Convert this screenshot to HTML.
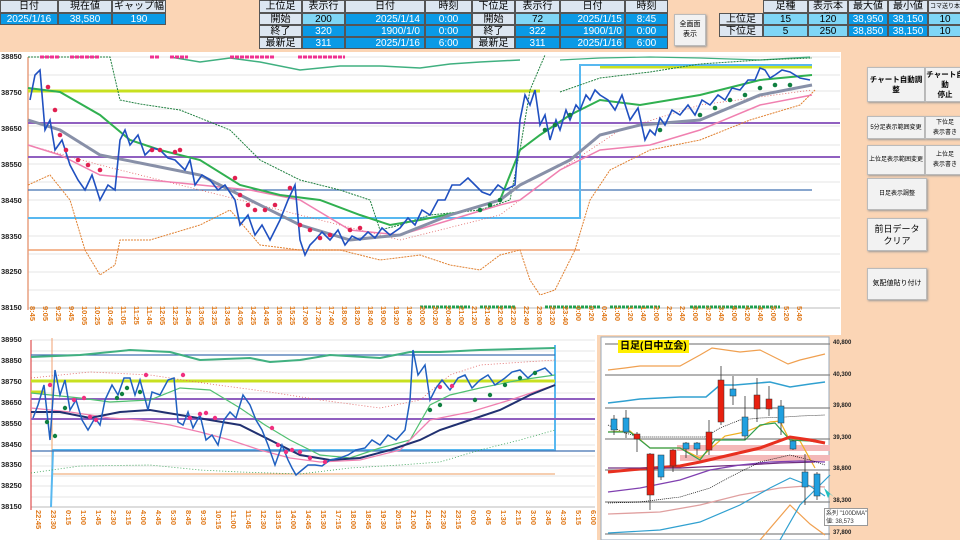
<!DOCTYPE html>
<html><head><meta charset="utf-8"><style>
*{margin:0;padding:0;box-sizing:border-box}
html,body{width:960px;height:540px;overflow:hidden}
body{background:#fbd5b5;font-family:"Liberation Sans","Noto Sans CJK JP",sans-serif;position:relative}
.c{position:absolute;font-size:10px;text-align:center;line-height:12px;border:1px solid #555;}
.h{background:#dce6f1;color:#000}
.b{background:#0a9ae6;color:#fff}
.lb{background:#7fd6f6;color:#000}
.btn{position:absolute;background:#f2f2f2;border:1px solid #bbb;box-shadow:1px 1px 2px #999;font-size:7px;display:flex;align-items:center;justify-content:center;text-align:center;line-height:10px}
.xl{position:absolute;display:flex;font-size:7.5px;color:#e07818;font-weight:bold}
.xl span{writing-mode:vertical-rl;display:block;height:26px}
.yl{position:absolute;font-size:7.5px;font-weight:bold;color:#222}
</style></head><body>
<div class="c h" style="left:0;top:0;width:58px;height:13px">日付</div>
<div class="c h" style="left:58px;top:0;width:54px;height:13px">現在値</div>
<div class="c h" style="left:112px;top:0;width:54px;height:13px">ギャップ幅</div>
<div class="c b" style="left:0;top:13px;width:58px;height:12px">2025/1/16</div>
<div class="c b" style="left:58px;top:13px;width:54px;height:12px">38,580</div>
<div class="c b" style="left:112px;top:13px;width:54px;height:12px">190</div>

<div class="c h" style="left:259px;top:0;width:43px;height:13px">上位足</div>
<div class="c h" style="left:302px;top:0;width:43px;height:13px">表示行</div>
<div class="c h" style="left:345px;top:0;width:80px;height:13px">日付</div>
<div class="c h" style="left:425px;top:0;width:47px;height:13px">時刻</div>
<div class="c h" style="left:259px;top:13px;width:43px;height:12px">開始</div>
<div class="c lb" style="left:302px;top:13px;width:43px;height:12px">200</div>
<div class="c b" style="left:345px;top:13px;width:80px;height:12px;text-align:right;padding-right:4px">2025/1/14</div>
<div class="c b" style="left:425px;top:13px;width:47px;height:12px">0:00</div>
<div class="c h" style="left:259px;top:25px;width:43px;height:12px">終了</div>
<div class="c b" style="left:302px;top:25px;width:43px;height:12px">320</div>
<div class="c b" style="left:345px;top:25px;width:80px;height:12px;text-align:right;padding-right:4px">1900/1/0</div>
<div class="c b" style="left:425px;top:25px;width:47px;height:12px">0:00</div>
<div class="c h" style="left:259px;top:37px;width:43px;height:12px">最新足</div>
<div class="c b" style="left:302px;top:37px;width:43px;height:12px">311</div>
<div class="c b" style="left:345px;top:37px;width:80px;height:12px;text-align:right;padding-right:4px">2025/1/16</div>
<div class="c b" style="left:425px;top:37px;width:47px;height:12px">6:00</div>

<div class="c h" style="left:472px;top:0;width:43px;height:13px">下位足</div>
<div class="c h" style="left:515px;top:0;width:45px;height:13px">表示行</div>
<div class="c h" style="left:560px;top:0;width:65px;height:13px">日付</div>
<div class="c h" style="left:625px;top:0;width:43px;height:13px">時刻</div>
<div class="c h" style="left:472px;top:13px;width:43px;height:12px">開始</div>
<div class="c lb" style="left:515px;top:13px;width:45px;height:12px">72</div>
<div class="c b" style="left:560px;top:13px;width:65px;height:12px;text-align:right;padding-right:2px">2025/1/15</div>
<div class="c b" style="left:625px;top:13px;width:43px;height:12px">8:45</div>
<div class="c h" style="left:472px;top:25px;width:43px;height:12px">終了</div>
<div class="c b" style="left:515px;top:25px;width:45px;height:12px">322</div>
<div class="c b" style="left:560px;top:25px;width:65px;height:12px;text-align:right;padding-right:2px">1900/1/0</div>
<div class="c b" style="left:625px;top:25px;width:43px;height:12px">0:00</div>
<div class="c h" style="left:472px;top:37px;width:43px;height:12px">最新足</div>
<div class="c b" style="left:515px;top:37px;width:45px;height:12px">311</div>
<div class="c b" style="left:560px;top:37px;width:65px;height:12px;text-align:right;padding-right:2px">2025/1/16</div>
<div class="c b" style="left:625px;top:37px;width:43px;height:12px">6:00</div>

<div class="btn" style="left:674px;top:14px;width:32px;height:32px;font-size:7px">全画面<br>表示</div>

<div class="c h" style="left:763px;top:0;width:45px;height:13px">足種</div>
<div class="c h" style="left:808px;top:0;width:40px;height:13px">表示本数</div>
<div class="c h" style="left:848px;top:0;width:40px;height:13px">最大値</div>
<div class="c h" style="left:888px;top:0;width:40px;height:13px">最小値</div>
<div class="c h" style="left:928px;top:0;width:34px;height:13px;font-size:6px">コマ送り本</div>
<div class="c h" style="left:719px;top:13px;width:44px;height:12px">上位足</div>
<div class="c lb" style="left:763px;top:13px;width:45px;height:12px">15</div>
<div class="c lb" style="left:808px;top:13px;width:40px;height:12px">120</div>
<div class="c b" style="left:848px;top:13px;width:40px;height:12px">38,950</div>
<div class="c b" style="left:888px;top:13px;width:40px;height:12px">38,150</div>
<div class="c lb" style="left:928px;top:13px;width:34px;height:12px">10</div>
<div class="c h" style="left:719px;top:25px;width:44px;height:12px">下位足</div>
<div class="c lb" style="left:763px;top:25px;width:45px;height:12px">5</div>
<div class="c lb" style="left:808px;top:25px;width:40px;height:12px">250</div>
<div class="c b" style="left:848px;top:25px;width:40px;height:12px">38,850</div>
<div class="c b" style="left:888px;top:25px;width:40px;height:12px">38,150</div>
<div class="c lb" style="left:928px;top:25px;width:34px;height:12px">10</div>

<div class="btn" style="left:867px;top:67px;width:58px;height:35px;font-size:7.5px;font-weight:bold">チャート自動調整</div>
<div class="btn" style="left:925px;top:67px;width:40px;height:35px;font-size:7.5px;font-weight:bold">チャート自動<br>停止</div>
<div class="btn" style="left:867px;top:116px;width:58px;height:23px;font-size:6px">5分足表示範囲変更</div>
<div class="btn" style="left:925px;top:116px;width:40px;height:23px;font-size:6px">下位足<br>表示書き</div>
<div class="btn" style="left:867px;top:145px;width:58px;height:30px;font-size:6px">上位足表示範囲変更</div>
<div class="btn" style="left:925px;top:145px;width:40px;height:30px;font-size:6px">上位足<br>表示書き</div>
<div class="btn" style="left:867px;top:178px;width:60px;height:32px;font-size:6px">日足表示調整</div>
<div class="btn" style="left:867px;top:218px;width:60px;height:33px;font-size:9px;line-height:12px">前日データ<br>クリア</div>
<div class="btn" style="left:867px;top:268px;width:60px;height:32px;font-size:7px">気配値貼り付け</div>

<div style="position:absolute;left:0;top:52px;width:841px;height:283px;background:#fff"></div>
<svg style="position:absolute;left:0;top:0" width="960" height="540">
<g stroke="#e4e4e4" stroke-width="1">
<line x1="28" y1="57" x2="840" y2="57"/><line x1="28" y1="75" x2="840" y2="75"/><line x1="28" y1="91" x2="840" y2="91"/><line x1="28" y1="109" x2="840" y2="109"/><line x1="28" y1="126" x2="840" y2="126"/><line x1="28" y1="145" x2="840" y2="145"/><line x1="28" y1="164" x2="840" y2="164"/><line x1="28" y1="182" x2="840" y2="182"/><line x1="28" y1="200" x2="840" y2="200"/><line x1="28" y1="218" x2="840" y2="218"/><line x1="28" y1="236" x2="840" y2="236"/><line x1="28" y1="254" x2="840" y2="254"/><line x1="28" y1="272" x2="840" y2="272"/><line x1="28" y1="290" x2="840" y2="290"/>
</g>
<line x1="28" y1="308" x2="840" y2="308" stroke="#bbb"/>
<line x1="28" y1="57" x2="28" y2="310" stroke="#e8a080" stroke-width="1.5"/>
<line x1="28" y1="91" x2="540" y2="91" stroke="#c8e020" stroke-width="3"/>
<line x1="600" y1="67" x2="812" y2="67" stroke="#c8e020" stroke-width="3"/>
<line x1="28" y1="123" x2="840" y2="123" stroke="#9060c0" stroke-width="2"/>
<line x1="28" y1="157" x2="840" y2="157" stroke="#9060c0" stroke-width="2"/>
<line x1="28" y1="190" x2="812" y2="190" stroke="#4070b0" stroke-width="1.2"/>
<polyline points="28,218 580,218 580,65 812,65" fill="none" stroke="#58b8f0" stroke-width="2"/>
<line x1="28" y1="250" x2="580" y2="250" stroke="#f0a070" stroke-width="1.5"/>
<polyline points="170,57 200,62 230,58 260,62 300,70 340,66 380,66 420,68 450,64 480,62 520,60" fill="none" stroke="#40b080" stroke-width="1.5"/>
<polyline points="560,60 600,58 650,57 700,58 760,60 810,57" fill="none" stroke="#40b080" stroke-width="1.2"/>
<polyline points="28,57 110,57 120,100 140,104 180,110 230,130 260,160 300,180 340,190 370,200 380,230 400,225 430,215 480,210 510,200 520,150 530,90 545,55" fill="none" stroke="#208040" stroke-width="1" stroke-dasharray="2,1"/>
<polyline points="560,92 600,78 650,72 700,64 760,60 812,58" fill="none" stroke="#208040" stroke-width="1" stroke-dasharray="2,1"/>
<polyline points="28,185 50,175 70,200 85,250 100,275 115,265 120,240 150,240 200,225 230,210 260,245 300,250 340,250 380,260 420,255 450,265 480,270 500,255 520,250 530,280 540,295 555,290 575,250 590,200 610,170 650,150 700,140 750,120 800,105 815,90" fill="none" stroke="#e08030" stroke-width="1" stroke-dasharray="2,1"/>
<polyline points="28,145 100,165 200,190 300,215 400,240 500,215 560,170 620,130 700,105 812,90" fill="none" stroke="#e06060" stroke-width="0.8" stroke-dasharray="1,2"/>
<polyline points="28,145 60,155 100,175 150,180 200,185 250,190 300,200 350,230 400,235 450,220 500,205 520,200 560,170 600,150 650,145 700,130 760,105 812,95" fill="none" stroke="#f080b0" stroke-width="1.5"/>
<polyline points="28,88 60,92 100,115 130,140 160,150 200,160 240,185 280,195 320,200 360,215 390,225 420,220 460,212 500,200 520,150 540,135 570,115 600,100 640,105 700,95 760,80 812,75" fill="none" stroke="#30b050" stroke-width="2"/>
<polyline points="28,120 60,130 100,155 150,165 200,175 250,200 300,225 350,240 400,235 450,215 500,200 520,185 540,175 570,160 600,135 640,125 700,120 760,95 812,85" fill="none" stroke="#8890a8" stroke-width="3"/>
<polyline points="30,100 35,75 40,70 45,130 50,120 55,150 62,140 70,165 78,180 85,190 92,175 100,200 108,185 115,190 120,140 125,130 130,145 138,135 145,155 152,148 160,150 168,158 175,160 185,170 190,160 195,185 202,175 210,180 218,190 225,185 235,200 240,225 248,215 255,235 262,225 270,240 280,220 288,200 295,185 300,240 305,255 310,245 315,240 322,232 330,240 338,230 345,245 352,236 360,240 368,232 375,238 382,228 390,235 400,228 408,218 415,225 422,210 430,215 438,200 445,200 452,185 460,185 468,178 475,185 482,192 490,195 498,185 505,190 515,185 520,120 525,95 530,105 535,90 540,125 545,115 550,140 556,120 560,130 566,110 570,120 576,105 580,110 586,95 590,100 595,90 600,95 608,100 615,110 622,95 630,120 638,108 645,140 650,130 655,135 660,118 665,125 672,110 680,115 688,105 695,115 702,100 710,105 718,95 725,100 732,88 740,90 748,80 755,80 760,68 765,70 770,78 775,75 782,70 790,72 800,78 810,80" fill="none" stroke="#2050c0" stroke-width="1.6"/>
<g fill="#e02050">
<circle cx="48" cy="87" r="2.3"/><circle cx="55" cy="110" r="2.3"/><circle cx="60" cy="135" r="2.3"/><circle cx="66" cy="150" r="2.3"/><circle cx="78" cy="160" r="2.3"/><circle cx="88" cy="165" r="2.3"/><circle cx="100" cy="170" r="2.3"/><circle cx="152" cy="150" r="2.3"/><circle cx="160" cy="150" r="2.3"/><circle cx="175" cy="152" r="2.3"/><circle cx="180" cy="150" r="2.3"/><circle cx="235" cy="178" r="2.3"/><circle cx="240" cy="195" r="2.3"/><circle cx="248" cy="205" r="2.3"/><circle cx="255" cy="210" r="2.3"/><circle cx="265" cy="210" r="2.3"/><circle cx="275" cy="205" r="2.3"/><circle cx="290" cy="188" r="2.3"/><circle cx="300" cy="225" r="2.3"/><circle cx="310" cy="230" r="2.3"/><circle cx="320" cy="238" r="2.3"/><circle cx="330" cy="235" r="2.3"/><circle cx="350" cy="230" r="2.3"/><circle cx="360" cy="228" r="2.3"/></g>
<g fill="#108040">
<circle cx="480" cy="210" r="2.3"/><circle cx="490" cy="205" r="2.3"/><circle cx="500" cy="200" r="2.3"/><circle cx="545" cy="130" r="2.3"/><circle cx="555" cy="125" r="2.3"/><circle cx="570" cy="115" r="2.3"/><circle cx="660" cy="130" r="2.3"/><circle cx="700" cy="115" r="2.3"/><circle cx="715" cy="108" r="2.3"/><circle cx="730" cy="100" r="2.3"/><circle cx="745" cy="95" r="2.3"/><circle cx="760" cy="88" r="2.3"/><circle cx="775" cy="85" r="2.3"/><circle cx="790" cy="85" r="2.3"/></g>
<g stroke="#f03090" stroke-width="3" stroke-dasharray="4,1">
<line x1="40" y1="57" x2="60" y2="57"/><line x1="70" y1="57" x2="100" y2="57"/><line x1="150" y1="57" x2="160" y2="57"/><line x1="170" y1="57" x2="188" y2="57"/><line x1="230" y1="57" x2="275" y2="57"/><line x1="298" y1="57" x2="345" y2="57"/></g>
<g stroke="#20a050" stroke-width="3" stroke-dasharray="3,1">
<line x1="420" y1="307" x2="470" y2="307"/><line x1="480" y1="307" x2="515" y2="307"/><line x1="545" y1="307" x2="600" y2="307"/><line x1="610" y1="307" x2="660" y2="307"/><line x1="690" y1="307" x2="780" y2="307"/></g>

<rect x="0" y="335" width="597" height="205" fill="#fff"/>
<g stroke="#e4e4e4"><line x1="31" y1="340" x2="595" y2="340"/><line x1="31" y1="351" x2="595" y2="351"/><line x1="31" y1="361" x2="595" y2="361"/><line x1="31" y1="372" x2="595" y2="372"/><line x1="31" y1="382" x2="595" y2="382"/><line x1="31" y1="393" x2="595" y2="393"/><line x1="31" y1="403" x2="595" y2="403"/><line x1="31" y1="414" x2="595" y2="414"/><line x1="31" y1="424" x2="595" y2="424"/><line x1="31" y1="435" x2="595" y2="435"/><line x1="31" y1="445" x2="595" y2="445"/><line x1="31" y1="456" x2="595" y2="456"/><line x1="31" y1="466" x2="595" y2="466"/><line x1="31" y1="476" x2="595" y2="476"/><line x1="31" y1="486" x2="595" y2="486"/><line x1="31" y1="497" x2="595" y2="497"/></g>
<line x1="31" y1="507" x2="595" y2="507" stroke="#bbb"/>
<line x1="31" y1="340" x2="31" y2="510" stroke="#e05050" stroke-width="1.2"/>
<line x1="52" y1="338" x2="52" y2="372" stroke="#f0a070" stroke-width="1"/>
<polyline points="52,372 52,474 555,474" fill="none" stroke="#f0b080" stroke-width="1.2"/>
<polyline points="51,507 53,450 555,450 555,345" fill="none" stroke="#58b8f0" stroke-width="2"/>
<line x1="31" y1="381" x2="555" y2="381" stroke="#c8e020" stroke-width="3"/>
<line x1="31" y1="392" x2="45" y2="392" stroke="#c8e020" stroke-width="3"/>
<line x1="31" y1="399" x2="595" y2="399" stroke="#9060c0" stroke-width="2"/>
<line x1="31" y1="419" x2="595" y2="419" stroke="#9060c0" stroke-width="2"/>
<line x1="31" y1="355" x2="555" y2="355" stroke="#4070b0" stroke-width="1.2"/>
<line x1="31" y1="451" x2="595" y2="451" stroke="#4070b0" stroke-width="1.2"/>
<polyline points="31,357 80,355 130,350 170,352 200,360 250,358 270,362 300,360 330,355 380,358 410,352 440,352 480,350 555,348" fill="none" stroke="#40b080" stroke-width="2"/>
<polyline points="31,393 80,398 110,402 150,400 180,388 210,390 240,408 265,425 290,440 320,455 350,458 380,448 410,440 430,405 450,395 480,388 520,380 555,375" fill="none" stroke="#50c070" stroke-width="1.2"/>
<polyline points="31,378 90,372 150,375 210,384 270,392 320,400 380,408 420,400 450,375 480,365 555,360" fill="none" stroke="#e06060" stroke-width="0.8" stroke-dasharray="1,2"/>
<polyline points="31,473 80,466 150,465 200,470 240,472 300,474 350,468 400,465 440,462 480,450 520,440 555,430" fill="none" stroke="#30a050" stroke-width="0.8" stroke-dasharray="1,2"/>
<polyline points="31,408 70,412 110,418 140,420 170,425 200,432 230,440 260,450 290,458 320,462 360,460 400,450 430,420 470,412 510,400 555,385" fill="none" stroke="#f080b0" stroke-width="1.3"/>
<polyline points="31,412 60,412 90,418 120,412 150,410 180,415 210,420 240,425 270,440 300,455 330,460 360,458 390,450 420,440 440,430 470,420 500,410 530,395 555,385" fill="none" stroke="#203070" stroke-width="2"/>
<polyline points="33,418 38,405 44,385 50,440 55,370 60,395 65,380 70,410 76,400 82,420 88,430 95,418 100,425 105,400 112,385 118,395 124,378 130,378 135,395 140,380 148,410 152,392 160,395 168,380 174,378 178,422 183,425 188,412 193,428 200,415 206,440 212,435 218,445 224,420 230,412 236,418 243,395 250,405 256,420 262,430 268,445 275,465 282,445 288,460 292,468 296,475 302,470 308,465 315,465 322,466 330,460 340,458 348,455 356,450 365,448 372,440 380,445 388,435 396,440 405,430 410,400 413,350 418,375 425,365 430,400 436,388 442,380 450,390 458,378 465,375 472,388 480,380 488,375 495,385 505,378 512,372 520,370 528,378 535,372 545,368 552,375" fill="none" stroke="#2060c0" stroke-width="1.5"/>
<g fill="#f03080"><circle cx="50" cy="385" r="2.2"/><circle cx="74" cy="400" r="2.2"/><circle cx="84" cy="398" r="2.2"/><circle cx="90" cy="417" r="2.2"/><circle cx="96" cy="420" r="2.2"/><circle cx="146" cy="375" r="2.2"/><circle cx="183" cy="375" r="2.2"/><circle cx="190" cy="418" r="2.2"/><circle cx="200" cy="414" r="2.2"/><circle cx="206" cy="413" r="2.2"/><circle cx="215" cy="418" r="2.2"/><circle cx="272" cy="428" r="2.2"/><circle cx="278" cy="445" r="2.2"/><circle cx="286" cy="452" r="2.2"/><circle cx="292" cy="450" r="2.2"/><circle cx="300" cy="452" r="2.2"/><circle cx="310" cy="458" r="2.2"/><circle cx="325" cy="462" r="2.2"/><circle cx="440" cy="387" r="2.2"/><circle cx="452" cy="386" r="2.2"/></g>
<g fill="#108040"><circle cx="47" cy="422" r="2.2"/><circle cx="55" cy="436" r="2.2"/><circle cx="65" cy="408" r="2.2"/><circle cx="117" cy="398" r="2.2"/><circle cx="122" cy="394" r="2.2"/><circle cx="127" cy="388" r="2.2"/><circle cx="140" cy="392" r="2.2"/><circle cx="430" cy="410" r="2.2"/><circle cx="440" cy="405" r="2.2"/><circle cx="475" cy="400" r="2.2"/><circle cx="490" cy="395" r="2.2"/><circle cx="505" cy="385" r="2.2"/><circle cx="520" cy="378" r="2.2"/><circle cx="535" cy="373" r="2.2"/></g>

<rect x="601" y="337" width="228" height="203" fill="#fff" stroke="#9ab"/>
<g stroke="#888" stroke-width="1.2"><line x1="605" y1="344" x2="830" y2="344"/><line x1="605" y1="375" x2="830" y2="375"/><line x1="605" y1="408" x2="830" y2="408"/><line x1="605" y1="439" x2="830" y2="439"/><line x1="605" y1="470" x2="830" y2="470"/><line x1="605" y1="502" x2="830" y2="502"/><line x1="605" y1="534" x2="830" y2="534"/></g>
<rect x="677" y="445" width="153" height="6" fill="#f4b8b8"/>
<rect x="680" y="455" width="150" height="6" fill="#f4b8b8"/>
<polyline points="608,370 625,368 640,366 680,366 700,355 712,348 740,352 760,350 788,364 800,360 825,354" fill="none" stroke="#f0a050" stroke-width="1.2"/>
<polyline points="608,403 625,401 640,399 680,397 706,397 720,385 735,385 770,382 790,387 810,384 825,382" fill="none" stroke="#30a0d0" stroke-width="1.5"/>
<polyline points="608,425 625,433 640,437 680,437 705,437 720,428 740,420 760,418 785,417 800,416 825,415" fill="none" stroke="#000" stroke-width="0.7" stroke-dasharray="1,1"/>
<polyline points="608,432 630,431 650,448 680,448 700,458 725,436 745,432 770,422 780,421 788,437 800,441 815,468" fill="none" stroke="#f0b020" stroke-width="1.2"/>
<polyline points="608,432 630,432 650,448 680,448 700,460 715,440 745,440 760,425 775,423 790,440 810,441 825,443" fill="none" stroke="#30a050" stroke-width="1.2"/>
<polyline points="608,472 640,469 680,466 700,462 730,455 760,448 790,437 810,440 825,443" fill="none" stroke="#e83020" stroke-width="3"/>
<polyline points="608,468 680,468 720,466 745,465 780,463 815,462" fill="none" stroke="#703080" stroke-width="1.3"/>
<polyline points="608,492 640,488 680,480 710,470 740,465 770,462 800,461 825,462" fill="none" stroke="#8040b0" stroke-width="1.3"/>
<polyline points="608,503 640,502 680,497 710,488 730,477 760,462 790,455 810,460 825,465" fill="none" stroke="#000" stroke-width="0.7" stroke-dasharray="1,1"/>
<polyline points="608,514 660,512 700,505 740,495 780,488 805,486 825,487" fill="none" stroke="#e0a0a0" stroke-width="1.3"/>
<polyline points="608,533 660,530 700,522 740,505 770,488 790,478 810,486 825,496" fill="none" stroke="#30a0d0" stroke-width="1.2"/>
<polyline points="760,540 790,505 810,524 825,535" fill="none" stroke="#f0a050" stroke-width="1.2"/>
<polyline points="780,540 800,505 815,490 830,475" fill="none" stroke="#30a0d0" stroke-width="1.2"/>
<g stroke="#333" stroke-width="0.8"><line x1="614" y1="415" x2="614" y2="435"/><line x1="626" y1="410" x2="626" y2="438"/><line x1="637" y1="432" x2="637" y2="452"/><line x1="650" y1="453" x2="650" y2="510"/><line x1="661" y1="455" x2="661" y2="480"/><line x1="673" y1="449" x2="673" y2="472"/><line x1="686" y1="442" x2="686" y2="458"/><line x1="697" y1="442" x2="697" y2="455"/><line x1="709" y1="420" x2="709" y2="455"/><line x1="721" y1="366" x2="721" y2="425"/><line x1="733" y1="376" x2="733" y2="405"/><line x1="745" y1="396" x2="745" y2="440"/><line x1="757" y1="378" x2="757" y2="422"/><line x1="769" y1="386" x2="769" y2="416"/><line x1="781" y1="400" x2="781" y2="435"/><line x1="793" y1="440" x2="793" y2="450"/><line x1="805" y1="454" x2="805" y2="505"/><line x1="817" y1="472" x2="817" y2="500"/></g>
<g stroke="#333" stroke-width="0.5">
<rect x="611" y="419" width="6" height="11" fill="#20a0e0"/><rect x="623" y="418" width="6" height="14" fill="#20a0e0"/><rect x="634" y="434" width="6" height="5" fill="#e82010"/><rect x="647" y="454" width="7" height="41" fill="#e82010"/><rect x="658" y="455" width="6" height="22" fill="#20a0e0"/><rect x="670" y="450" width="6" height="16" fill="#e82010"/><rect x="683" y="443" width="6" height="6" fill="#20a0e0"/><rect x="694" y="443" width="6" height="6" fill="#20a0e0"/><rect x="706" y="432" width="6" height="18" fill="#e82010"/><rect x="718" y="380" width="6" height="42" fill="#e82010"/><rect x="730" y="389" width="6" height="7" fill="#20a0e0"/><rect x="742" y="417" width="6" height="19" fill="#20a0e0"/><rect x="754" y="395" width="6" height="14" fill="#e82010"/><rect x="766" y="399" width="6" height="10" fill="#e82010"/><rect x="778" y="406" width="6" height="17" fill="#20a0e0"/><rect x="790" y="441" width="6" height="8" fill="#20a0e0"/><rect x="802" y="472" width="6" height="15" fill="#20a0e0"/><rect x="814" y="474" width="6" height="22" fill="#20a0e0"/></g>
<polygon points="824,488 828,498 830,494 834,497" fill="#20c0c0"/>
</svg>

<div style="position:absolute;left:618px;top:340px;background:#ffef00;font-size:10px;font-weight:bold;padding:0 2px;line-height:13px">日足(日中立会)</div>
<div style="position:absolute;left:824px;top:508px;width:44px;height:18px;background:#fff;border:1px solid #999;font-size:6px;line-height:8px;padding:1px;color:#333;white-space:nowrap;overflow:hidden">系列 "100DMA" 要素 1<br>値: 38,573</div>
<div class="yl" style="left:833px;top:328px;font-size:6px;line-height:31.6px">40,800<br>40,300<br>39,800<br>39,300<br>38,800<br>38,300<br>37,800</div>

<div class="yl" style="left:1px;top:39px;line-height:35.9px">38850<br>38750<br>38650<br>38550<br>38450<br>38350<br>38250<br>38150</div>
<div class="yl" style="left:1px;top:330px;line-height:20.9px">38950<br>38850<br>38750<br>38650<br>38550<br>38450<br>38350<br>38250<br>38150</div>

<div class="xl" style="left:24px;top:306px"><span style="width:13px">8:45</span><span style="width:13px">9:05</span><span style="width:13px">9:25</span><span style="width:13px">9:45</span><span style="width:13px">10:05</span><span style="width:13px">10:25</span><span style="width:13px">10:45</span><span style="width:13px">11:05</span><span style="width:13px">11:25</span><span style="width:13px">11:45</span><span style="width:13px">12:05</span><span style="width:13px">12:25</span><span style="width:13px">12:45</span><span style="width:13px">13:05</span><span style="width:13px">13:25</span><span style="width:13px">13:45</span><span style="width:13px">14:05</span><span style="width:13px">14:25</span><span style="width:13px">14:45</span><span style="width:13px">15:05</span><span style="width:13px">15:25</span><span style="width:13px">17:00</span><span style="width:13px">17:20</span><span style="width:13px">17:40</span><span style="width:13px">18:00</span><span style="width:13px">18:20</span><span style="width:13px">18:40</span><span style="width:13px">19:00</span><span style="width:13px">19:20</span><span style="width:13px">19:40</span><span style="width:13px">20:00</span><span style="width:13px">20:20</span><span style="width:13px">20:40</span><span style="width:13px">21:00</span><span style="width:13px">21:20</span><span style="width:13px">21:40</span><span style="width:13px">22:00</span><span style="width:13px">22:20</span><span style="width:13px">22:40</span><span style="width:13px">23:00</span><span style="width:13px">23:20</span><span style="width:13px">23:40</span><span style="width:13px">0:00</span><span style="width:13px">0:20</span><span style="width:13px">0:40</span><span style="width:13px">1:00</span><span style="width:13px">1:20</span><span style="width:13px">1:40</span><span style="width:13px">2:00</span><span style="width:13px">2:20</span><span style="width:13px">2:40</span><span style="width:13px">3:00</span><span style="width:13px">3:20</span><span style="width:13px">3:40</span><span style="width:13px">4:00</span><span style="width:13px">4:20</span><span style="width:13px">4:40</span><span style="width:13px">5:00</span><span style="width:13px">5:20</span><span style="width:13px">5:40</span></div>

<div class="xl" style="left:28px;top:510px"><span style="width:15px">22:45</span><span style="width:15px">23:30</span><span style="width:15px">0:15</span><span style="width:15px">1:00</span><span style="width:15px">1:45</span><span style="width:15px">2:30</span><span style="width:15px">3:15</span><span style="width:15px">4:00</span><span style="width:15px">4:45</span><span style="width:15px">5:30</span><span style="width:15px">8:45</span><span style="width:15px">9:30</span><span style="width:15px">10:15</span><span style="width:15px">11:00</span><span style="width:15px">11:45</span><span style="width:15px">12:30</span><span style="width:15px">13:15</span><span style="width:15px">14:00</span><span style="width:15px">14:45</span><span style="width:15px">15:30</span><span style="width:15px">17:15</span><span style="width:15px">18:00</span><span style="width:15px">18:45</span><span style="width:15px">19:30</span><span style="width:15px">20:15</span><span style="width:15px">21:00</span><span style="width:15px">21:45</span><span style="width:15px">22:30</span><span style="width:15px">23:15</span><span style="width:15px">0:00</span><span style="width:15px">0:45</span><span style="width:15px">1:30</span><span style="width:15px">2:15</span><span style="width:15px">3:00</span><span style="width:15px">3:45</span><span style="width:15px">4:30</span><span style="width:15px">5:15</span><span style="width:15px">6:00</span></div>
</body></html>
